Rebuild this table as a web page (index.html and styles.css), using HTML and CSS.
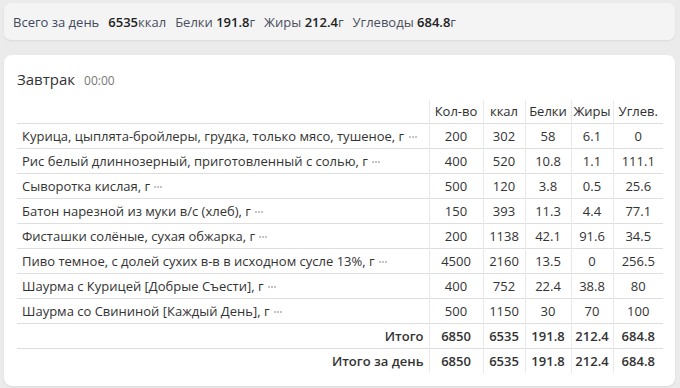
FILE: index.html
```html
<!DOCTYPE html>
<html lang="ru">
<head>
<meta charset="utf-8">
<link rel="stylesheet" href="styles.css">
</head>
<body>
<div class="page">
  <div class="summary">
    <span class="lbl">Всего за день</span>
    <span class="item"><b>6535</b>ккал</span>
    <span class="item">Белки <b>191.8</b>г</span>
    <span class="item">Жиры <b>212.4</b>г</span>
    <span class="item">Углеводы <b>684.8</b>г</span>
  </div>
  <div class="card">
    <div class="meal-head">
      <span class="meal-title">Завтрак</span>
      <span class="meal-time">00:00</span>
    </div>
    <table class="foods">
      <colgroup>
        <col class="c-name"><col class="c-qty"><col class="c-kcal"><col class="c-prot"><col class="c-fat"><col class="c-carb">
      </colgroup>
      <thead>
        <tr><th class="name"></th><th>Кол-во</th><th>ккал</th><th>Белки</th><th>Жиры</th><th>Углев.</th></tr>
      </thead>
      <tbody>
        <tr><td class="name">Курица, цыплята-бройлеры, грудка, только мясо, тушеное, г <span class="dots"><i></i><i></i><i></i></span></td><td>200</td><td>302</td><td>58</td><td>6.1</td><td>0</td></tr>
        <tr><td class="name">Рис белый длиннозерный, приготовленный с солью, г <span class="dots"><i></i><i></i><i></i></span></td><td>400</td><td>520</td><td>10.8</td><td>1.1</td><td>111.1</td></tr>
        <tr><td class="name">Сыворотка кислая, г <span class="dots"><i></i><i></i><i></i></span></td><td>500</td><td>120</td><td>3.8</td><td>0.5</td><td>25.6</td></tr>
        <tr><td class="name">Батон нарезной из муки в/с (хлеб), г <span class="dots"><i></i><i></i><i></i></span></td><td>150</td><td>393</td><td>11.3</td><td>4.4</td><td>77.1</td></tr>
        <tr><td class="name">Фисташки солёные, сухая обжарка, г <span class="dots"><i></i><i></i><i></i></span></td><td>200</td><td>1138</td><td>42.1</td><td>91.6</td><td>34.5</td></tr>
        <tr><td class="name">Пиво темное, с долей сухих в-в в исходном сусле 13%, г <span class="dots"><i></i><i></i><i></i></span></td><td>4500</td><td>2160</td><td>13.5</td><td>0</td><td>256.5</td></tr>
        <tr><td class="name">Шаурма с Курицей [Добрые Съести], г <span class="dots"><i></i><i></i><i></i></span></td><td>400</td><td>752</td><td>22.4</td><td>38.8</td><td>80</td></tr>
        <tr><td class="name">Шаурма со Свининой [Каждый День], г <span class="dots"><i></i><i></i><i></i></span></td><td>500</td><td>1150</td><td>30</td><td>70</td><td>100</td></tr>
        <tr class="total"><td class="name">Итого</td><td>6850</td><td>6535</td><td>191.8</td><td>212.4</td><td>684.8</td></tr>
        <tr class="total"><td class="name">Итого за день</td><td>6850</td><td>6535</td><td>191.8</td><td>212.4</td><td>684.8</td></tr>
      </tbody>
    </table>
  </div>
</div>
</body>
</html>
```
FILE: styles.css
```css
html, body {
  margin: 0;
  padding: 0;
  background: #ebebeb;
  font-family: "Open Sans", "Noto Sans", sans-serif;
  color: #333;
}
.page {
  padding: 3px 5px 0 4px;
  height: 388px;
  box-sizing: border-box;
  overflow: hidden;
}
.summary {
  height: 37px;
  box-sizing: border-box;
  background: #f4f4f4;
  border-radius: 7px;
  box-shadow: 0 1px 2px rgba(0,0,0,0.08);
  display: flex;
  align-items: center;
  padding: 0 0 0 9px;
  font-size: 13px;
  color: #4a4f5e;
  gap: 9px;
}
.summary .lbl { color: #40485e; }
.summary b { font-weight: 600; color: #222; }
.card {
  margin-top: 15px;
  background: #fff;
  border-radius: 8px;
  box-shadow: 0 1px 2px rgba(0,0,0,0.08);
  padding: 12px 12px 16px 13px;
  height: 331px;
  box-sizing: border-box;
}
.meal-head {
  display: flex;
  align-items: baseline;
  gap: 9px;
  height: 33px;
  line-height: 24px;
}
.meal-title { font-size: 15px; color: #333; }
.meal-time { font-size: 12px; color: #777; }
.foods {
  width: 646px;
  table-layout: fixed;
  border-collapse: collapse;
  font-size: 13px;
}
.c-name { width: 412px; }
.c-qty { width: 54px; }
.c-kcal { width: 42px; }
.c-prot { width: 46px; }
.c-fat { width: 42px; }
.c-carb { width: 50px; }
.foods th, .foods td {
  padding: 0;
  text-align: center;
  font-weight: 400;
  white-space: nowrap;
  overflow: hidden;
}
.foods th {
  height: 23px;
  line-height: 23px;
  color: #2e2e2e;
}
.foods td {
  line-height: 24px;
  height: 24px;
  border-top: 1px solid #dedede;
}
.foods th + th, .foods td + td { border-left: 1px solid #e9e9e9; }
.foods td.name, .foods th.name { text-align: left; padding-left: 5px; }
.dots {
  display: inline-flex;
  gap: 1px;
  margin-left: 1px;
  vertical-align: 3px;
}
.dots i {
  display: block;
  width: 2px;
  height: 2px;
  border-radius: 50%;
  background: #b0b0b0;
}
.foods tr.total td { font-weight: 600; color: #333; }
.foods tr.total td.name { text-align: right; padding-right: 5px; }
```
